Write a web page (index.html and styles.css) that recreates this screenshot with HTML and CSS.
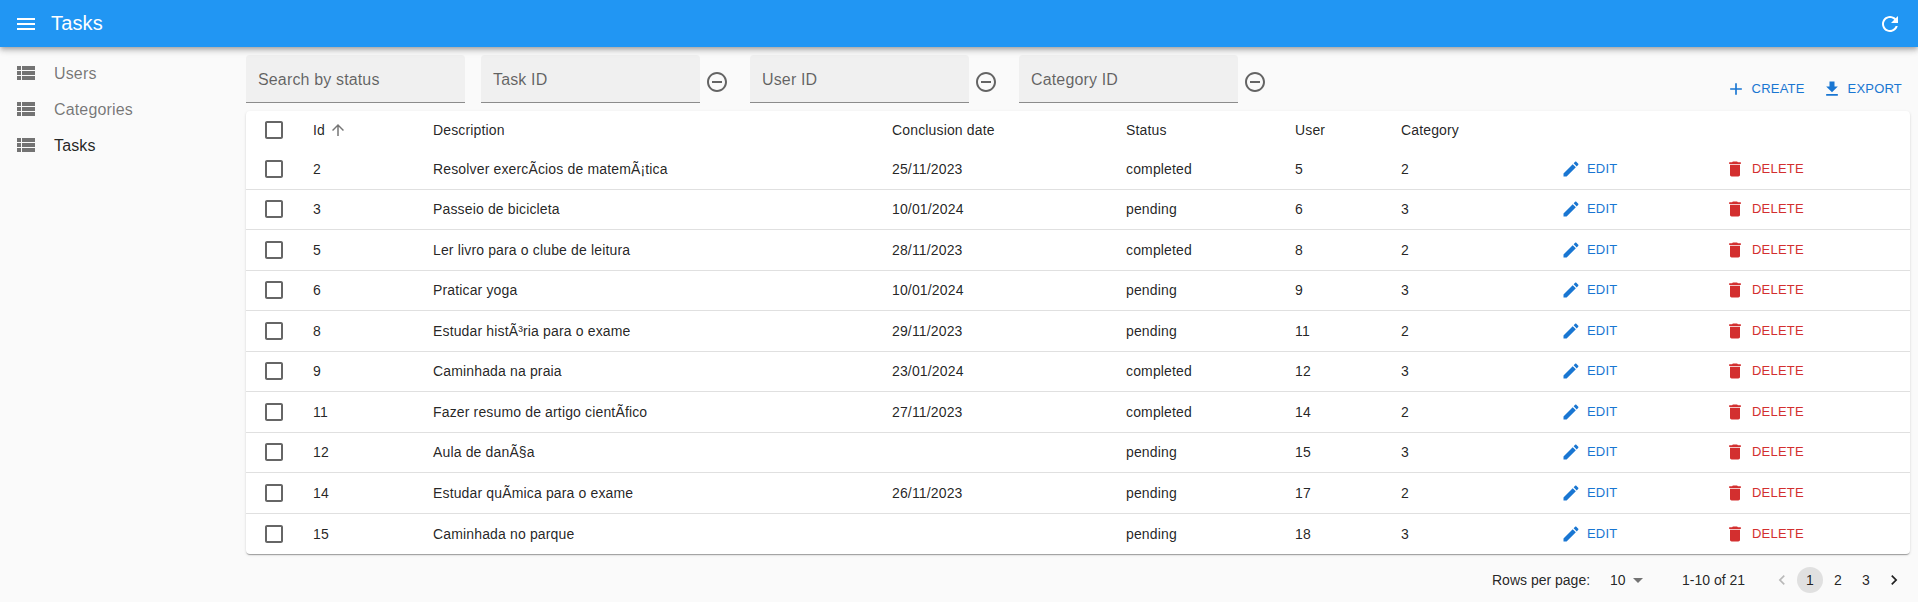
FILE: index.html
```html
<!DOCTYPE html>
<html lang="en">
<head>
<meta charset="utf-8">
<title>Tasks</title>
<link rel="stylesheet" href="styles.css">
</head>
<body>
<svg class="sprite" aria-hidden="true">
  <symbol id="i-menu" viewBox="0 0 24 24"><path d="M3 18h18v-2H3v2zm0-5h18v-2H3v2zm0-7v2h18V6H3z"/></symbol>
  <symbol id="i-list" viewBox="0 0 24 24"><path d="M3 14h4v-4H3v4zm0 5h4v-4H3v4zM3 9h4V5H3v4zm5 5h13v-4H8v4zm0 5h13v-4H8v4zM8 5v4h13V5H8z"/></symbol>
  <symbol id="i-refresh" viewBox="0 0 24 24"><path d="M17.65 6.35C16.2 4.9 14.21 4 12 4c-4.42 0-7.99 3.58-7.99 8s3.57 8 7.99 8c3.73 0 6.84-2.55 7.73-6h-2.08c-.82 2.33-3.04 4-5.65 4-3.31 0-6-2.69-6-6s2.69-6 6-6c1.66 0 3.14.69 4.22 1.78L13 11h7V4l-2.35 2.35z"/></symbol>
  <symbol id="i-minus" viewBox="0 0 24 24"><path d="M7 11v2h10v-2H7zm5-9C6.48 2 2 6.48 2 12s4.48 10 10 10 10-4.48 10-10S17.52 2 12 2zm0 18c-4.41 0-8-3.59-8-8s3.59-8 8-8 8 3.59 8 8-3.59 8-8 8z"/></symbol>
  <symbol id="i-add" viewBox="0 0 24 24"><path d="M19 13h-6v6h-2v-6H5v-2h6V5h2v6h6v2z"/></symbol>
  <symbol id="i-export" viewBox="0 0 24 24"><path d="M19 9h-4V3H9v6H5l7 7 7-7zM5 18v2h14v-2H5z"/></symbol>
  <symbol id="i-edit" viewBox="0 0 24 24"><path d="M3 17.25V21h3.75L17.81 9.94l-3.75-3.75L3 17.25zM20.71 7.04c.39-.39.39-1.02 0-1.41l-2.34-2.34c-.39-.39-1.02-.39-1.41 0l-1.83 1.83 3.75 3.75 1.83-1.83z"/></symbol>
  <symbol id="i-delete" viewBox="0 0 24 24"><path d="M6 19c0 1.1.9 2 2 2h8c1.1 0 2-.9 2-2V7H6v12zM19 4h-3.5l-1-1h-5l-1 1H5v2h14V4z"/></symbol>
  <symbol id="i-up" viewBox="0 0 24 24"><path d="M4 12l1.41 1.41L11 7.83V20h2V7.83l5.58 5.59L20 12l-8-8-8 8z"/></symbol>
  <symbol id="i-check" viewBox="0 0 24 24"><path d="M19 5v14H5V5h14m0-2H5c-1.1 0-2 .9-2 2v14c0 1.1.9 2 2 2h14c1.1 0 2-.9 2-2V5c0-1.1-.9-2-2-2z"/></symbol>
  <symbol id="i-drop" viewBox="0 0 24 24"><path d="M7 10l5 5 5-5z"/></symbol>
  <symbol id="i-prev" viewBox="0 0 24 24"><path d="M15.41 7.41L14 6l-6 6 6 6 1.41-1.41L10.83 12z"/></symbol>
  <symbol id="i-next" viewBox="0 0 24 24"><path d="M10 6L8.59 7.41 13.17 12l-4.58 4.59L10 18l6-6z"/></symbol>
</svg>

<header class="appbar">
  <svg class="icon"><use href="#i-menu"/></svg>
  <h1 class="appbar-title">Tasks</h1>
  <svg class="icon refresh"><use href="#i-refresh"/></svg>
</header>

<div class="layout">
  <nav class="sidebar">
    <a class="nav-item"><svg class="icon"><use href="#i-list"/></svg><span>Users</span></a>
    <a class="nav-item"><svg class="icon"><use href="#i-list"/></svg><span>Categories</span></a>
    <a class="nav-item active"><svg class="icon"><use href="#i-list"/></svg><span>Tasks</span></a>
  </nav>

  <main class="content">
    <div class="toolbar">
      <div class="filters">
        <div class="field first"><span>Search by status</span></div>
        <div class="filter-group"><div class="field"><span>Task ID</span></div><svg class="icon remove"><use href="#i-minus"/></svg></div>
        <div class="filter-group"><div class="field"><span>User ID</span></div><svg class="icon remove"><use href="#i-minus"/></svg></div>
        <div class="filter-group"><div class="field"><span>Category ID</span></div><svg class="icon remove"><use href="#i-minus"/></svg></div>
      </div>
      <div class="actions">
        <a class="btn primary"><svg class="icon-sm"><use href="#i-add"/></svg>Create</a>
        <a class="btn primary"><svg class="icon-sm"><use href="#i-export"/></svg>Export</a>
      </div>
    </div>

    <div class="card">
      <table class="grid">
        <colgroup>
          <col class="c-check"><col class="c-id"><col class="c-desc"><col class="c-date"><col class="c-status"><col class="c-user"><col class="c-cat"><col class="c-edit"><col class="c-del">
        </colgroup>
        <thead>
          <tr>
            <th class="check"><svg class="icon box"><use href="#i-check"/></svg></th>
            <th><span class="sorted">Id<svg class="icon-sort"><use href="#i-up"/></svg></span></th>
            <th>Description</th>
            <th>Conclusion date</th>
            <th>Status</th>
            <th>User</th>
            <th>Category</th>
            <th></th>
            <th></th>
          </tr>
        </thead>
        <tbody id="rows">
          <tr><td class="check"><svg class="icon box"><use href="#i-check"/></svg></td><td>2</td><td>Resolver exercÃ&shy;cios de matemÃ¡tica</td><td>25/11/2023</td><td>completed</td><td>5</td><td>2</td><td><a class="btn primary"><svg class="icon-sm"><use href="#i-edit"/></svg>Edit</a></td><td><a class="btn danger"><svg class="icon-sm"><use href="#i-delete"/></svg>Delete</a></td></tr>
          <tr><td class="check"><svg class="icon box"><use href="#i-check"/></svg></td><td>3</td><td>Passeio de bicicleta</td><td>10/01/2024</td><td>pending</td><td>6</td><td>3</td><td><a class="btn primary"><svg class="icon-sm"><use href="#i-edit"/></svg>Edit</a></td><td><a class="btn danger"><svg class="icon-sm"><use href="#i-delete"/></svg>Delete</a></td></tr>
          <tr><td class="check"><svg class="icon box"><use href="#i-check"/></svg></td><td>5</td><td>Ler livro para o clube de leitura</td><td>28/11/2023</td><td>completed</td><td>8</td><td>2</td><td><a class="btn primary"><svg class="icon-sm"><use href="#i-edit"/></svg>Edit</a></td><td><a class="btn danger"><svg class="icon-sm"><use href="#i-delete"/></svg>Delete</a></td></tr>
          <tr><td class="check"><svg class="icon box"><use href="#i-check"/></svg></td><td>6</td><td>Praticar yoga</td><td>10/01/2024</td><td>pending</td><td>9</td><td>3</td><td><a class="btn primary"><svg class="icon-sm"><use href="#i-edit"/></svg>Edit</a></td><td><a class="btn danger"><svg class="icon-sm"><use href="#i-delete"/></svg>Delete</a></td></tr>
          <tr><td class="check"><svg class="icon box"><use href="#i-check"/></svg></td><td>8</td><td>Estudar histÃ³ria para o exame</td><td>29/11/2023</td><td>pending</td><td>11</td><td>2</td><td><a class="btn primary"><svg class="icon-sm"><use href="#i-edit"/></svg>Edit</a></td><td><a class="btn danger"><svg class="icon-sm"><use href="#i-delete"/></svg>Delete</a></td></tr>
          <tr><td class="check"><svg class="icon box"><use href="#i-check"/></svg></td><td>9</td><td>Caminhada na praia</td><td>23/01/2024</td><td>completed</td><td>12</td><td>3</td><td><a class="btn primary"><svg class="icon-sm"><use href="#i-edit"/></svg>Edit</a></td><td><a class="btn danger"><svg class="icon-sm"><use href="#i-delete"/></svg>Delete</a></td></tr>
          <tr><td class="check"><svg class="icon box"><use href="#i-check"/></svg></td><td>11</td><td>Fazer resumo de artigo cientÃ&shy;fico</td><td>27/11/2023</td><td>completed</td><td>14</td><td>2</td><td><a class="btn primary"><svg class="icon-sm"><use href="#i-edit"/></svg>Edit</a></td><td><a class="btn danger"><svg class="icon-sm"><use href="#i-delete"/></svg>Delete</a></td></tr>
          <tr><td class="check"><svg class="icon box"><use href="#i-check"/></svg></td><td>12</td><td>Aula de danÃ§a</td><td></td><td>pending</td><td>15</td><td>3</td><td><a class="btn primary"><svg class="icon-sm"><use href="#i-edit"/></svg>Edit</a></td><td><a class="btn danger"><svg class="icon-sm"><use href="#i-delete"/></svg>Delete</a></td></tr>
          <tr><td class="check"><svg class="icon box"><use href="#i-check"/></svg></td><td>14</td><td>Estudar quÃ&shy;mica para o exame</td><td>26/11/2023</td><td>pending</td><td>17</td><td>2</td><td><a class="btn primary"><svg class="icon-sm"><use href="#i-edit"/></svg>Edit</a></td><td><a class="btn danger"><svg class="icon-sm"><use href="#i-delete"/></svg>Delete</a></td></tr>
          <tr><td class="check"><svg class="icon box"><use href="#i-check"/></svg></td><td>15</td><td>Caminhada no parque</td><td></td><td>pending</td><td>18</td><td>3</td><td><a class="btn primary"><svg class="icon-sm"><use href="#i-edit"/></svg>Edit</a></td><td><a class="btn danger"><svg class="icon-sm"><use href="#i-delete"/></svg>Delete</a></td></tr>
        </tbody>
      </table>
    </div>

    <div class="pagination">
      <span class="rows-label">Rows per page:</span>
      <span class="rows-select">10<svg class="icon drop"><use href="#i-drop"/></svg></span>
      <span class="range">1-10 of 21</span>
      <div class="pager">
        <span class="page disabled"><svg class="icon-pg"><use href="#i-prev"/></svg></span>
        <span class="page current">1</span>
        <span class="page">2</span>
        <span class="page">3</span>
        <span class="page"><svg class="icon-pg"><use href="#i-next"/></svg></span>
      </div>
    </div>
  </main>
</div>
</body>
</html>
```
FILE: styles.css
```css
* { box-sizing: border-box; }
html, body { margin: 0; height: 100%; }
body {
  background: #fafafa;
  color: rgba(0,0,0,.87);
  font-family: "Liberation Sans", Arial, sans-serif;
  font-size: 14px;
  overflow: hidden;
}
.sprite { display: none; }
.icon { width: 24px; height: 24px; fill: currentColor; flex: none; display: block; }
.icon-sm { width: 20px; height: 20px; fill: currentColor; flex: none; display: block; }
.icon-sort { width: 18px; height: 18px; fill: rgba(0,0,0,.54); margin-left: 4px; flex: none; }
.icon-pg { width: 20px; height: 20px; fill: currentColor; display: block; }

.appbar {
  height: 47px;
  background: #2196f3;
  color: #fff;
  display: flex;
  align-items: center;
  padding: 0 16px 0 14px;
  box-shadow: 0 2px 4px -1px rgba(0,0,0,.2), 0 4px 5px 0 rgba(0,0,0,.14), 0 1px 10px 0 rgba(0,0,0,.12);
  position: relative;
}
.appbar-title { font-size: 20px; font-weight: 400; margin: 0 0 0 13px; flex: 1; letter-spacing: .15px; }

.layout { display: flex; }
.sidebar { width: 246px; flex: none; padding-top: 8px; }
.nav-item {
  display: flex;
  align-items: center;
  height: 36px;
  padding-left: 14px;
  font-size: 16px;
  color: rgba(0,0,0,.54);
  letter-spacing: .15px;
}
.nav-item span { padding-top: 2px; }
.nav-item .icon { margin-right: 16px; color: rgba(0,0,0,.54); }
.nav-item.active { color: rgba(0,0,0,.87); }

.content { flex: 1; min-width: 0; padding: 8px 8px 0 0; }
.toolbar { display: flex; justify-content: space-between; align-items: flex-end; height: 56px; }
.filters { display: flex; align-self: flex-start; gap: 16px; }
.filter-group { display: flex; align-items: center; }
.field {
  width: 219px;
  height: 48px;
  background: #f0f0f0;
  border-radius: 4px 4px 0 0;
  border-bottom: 1px solid #8c8c8c;
  padding: 2px 12px 0;
  display: flex;
  align-items: center;
  font-size: 16px;
  color: rgba(0,0,0,.6);
  letter-spacing: .15px;
}
.remove { color: rgba(0,0,0,.6); margin: 6px 5px 0; }

.actions { display: flex; gap: 7px; padding: 0 3px 7px 0; }
.btn {
  display: flex;
  align-items: center;
  font-size: 13px;
  text-transform: uppercase;
  letter-spacing: .2px;
  line-height: 20px;
}
.btn .icon-sm { margin-right: 6px; }
.btn.primary { color: #1976d2; }
.btn.danger { color: #d32f2f; }
.btn.danger .icon-sm { margin-left: 1px; margin-right: 7px; }
.actions .btn { height: 30px; padding: 0 5px; }

.card {
  background: #fff;
  border-radius: 4px;
  box-shadow: 0 2px 1px -1px rgba(0,0,0,.2), 0 1px 1px 0 rgba(0,0,0,.14), 0 1px 3px 0 rgba(0,0,0,.12);
  overflow: hidden;
}
.grid { width: 100%; border-collapse: separate; border-spacing: 0; table-layout: fixed; letter-spacing: .15px; }
.c-check { width: 51px; }
.c-id { width: 120px; }
.c-desc { width: 459px; }
.c-date { width: 234px; }
.c-status { width: 169px; }
.c-user { width: 106px; }
.c-cat { width: 160px; }
.c-edit { width: 163px; }
th, td { padding: 0 16px; text-align: left; font-weight: 400; white-space: nowrap; }
thead tr { height: 38px; }
tbody tr { height: 40.5px; }
tbody td { border-bottom: 1px solid #e0e0e0; }
tbody tr:last-child td { border-bottom: 0; }
.check { padding: 0 0 0 16px; }
.box { color: rgba(0,0,0,.6); }
.sorted { display: inline-flex; align-items: center; }

.pagination { display: flex; align-items: center; height: 52px; padding-left: 1246px; }
.rows-label { flex: none; width: 118px; }
.rows-select { flex: none; display: flex; align-items: center; width: 72px; }
.drop { color: rgba(0,0,0,.54); }
.range { flex: none; width: 87px; }
.pager { flex: none; display: flex; align-items: center; gap: 2px; }
.page { width: 26px; height: 26px; border-radius: 50%; display: flex; align-items: center; justify-content: center; }
.page.current { background: #e0e0e0; }
.page.disabled { color: rgba(0,0,0,.26); }
```
